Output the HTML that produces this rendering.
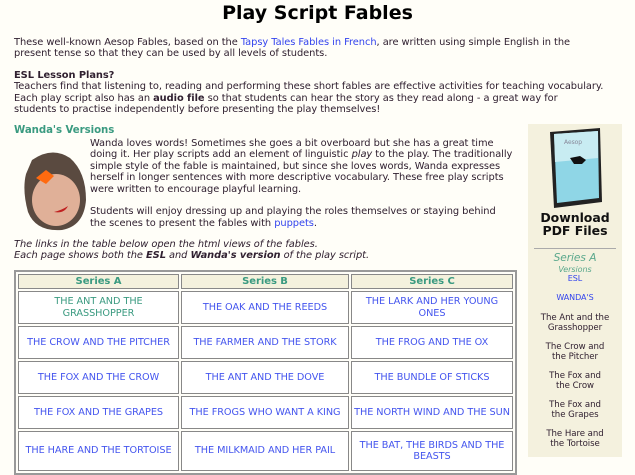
<!DOCTYPE html>
<html><head><meta charset="utf-8"><style>
*{margin:0;padding:0;box-sizing:border-box}
body{width:635px;height:457px;overflow:hidden;background:#fffef8;font-family:"DejaVu Sans","Liberation Sans",sans-serif;font-size:9.85px;color:#302030;position:relative;letter-spacing:-0.05px}
.a{position:absolute}
p{line-height:11.4px;white-space:nowrap}
a{color:#3344ee;text-decoration:none}
h1{position:absolute;left:0;width:635px;top:2px;text-align:center;font-size:19px;font-weight:bold;color:#000;letter-spacing:0}
table{border-collapse:separate;border-spacing:2px;border:2px solid #999;background:#fffef8}
td,th{border:1px solid #888;text-align:center;font-size:9.7px;background:#fff}
th{background:#f4f1dd;color:#3a9a80;height:15px;font-size:10px}
td{height:33px;color:#4455ee;line-height:11.3px}
.side{position:absolute;left:528px;top:124px;width:94px;height:333px;background:#f4f1de;text-align:center}
</style></head><body>
<h1>Play Script Fables</h1>
<p class="a" style="left:14px;top:37px">These well-known Aesop Fables, based on the <a>Tapsy Tales Fables in French</a>, are written using simple English in the<br>present tense so that they can be used by all levels of students.</p>
<p class="a" style="left:14px;top:70px"><b>ESL Lesson Plans?</b><br>Teachers find that listening to, reading and performing these short fables are effective activities for teaching vocabulary.<br>Each play script also has an <b>audio file</b> so that students can hear the story as they read along - a great way for<br>students to practise independently before presenting the play themselves!</p>
<p class="a" style="left:14px;top:125px;color:#3a9a80;font-weight:bold;font-size:10.2px">Wanda's Versions</p>
<svg class="a" style="left:22px;top:150px" width="66" height="82" viewBox="0 0 66 82">
<path d="M10 10 Q30 -4 48 8 Q64 22 64 50 Q62 76 40 80 Q14 82 6 62 Q0 40 4 24 Z" fill="#5a4a40"/>
<ellipse cx="34" cy="50" rx="24" ry="26" fill="#e0b098"/>
<path d="M14 28 l10 -8 l8 6 l-8 8z" fill="#ff6a10"/>
<path d="M32 62 q8 -2 14 -6 q-4 8 -14 6z" fill="#c02020"/>
</svg>
<p class="a" style="left:90px;top:138px">Wanda loves words! Sometimes she goes a bit overboard but she has a great time<br>doing it. Her play scripts add an element of linguistic <i>play</i> to the play. The traditionally<br>simple style of the fable is maintained, but since she loves words, Wanda expresses<br>herself in longer sentences with more descriptive vocabulary. These free play scripts<br>were written to encourage playful learning.<br><br>Students will enjoy dressing up and playing the roles themselves or staying behind<br>the scenes to present the fables with <a>puppets</a>.</p>
<p class="a" style="left:14px;top:239px;font-style:italic">The links in the table below open the html views of the fables.<br>Each page shows both the <b>ESL</b> and <b>Wanda's version</b> of the <i>play script</i>.</p>
<table class="a" style="left:14px;top:270px;width:503px">
<tr><th style="width:161px">Series A</th><th style="width:168px">Series B</th><th>Series C</th></tr>
<tr><td style="color:#3a9a80">THE ANT AND THE<br>GRASSHOPPER</td><td>THE OAK AND THE REEDS</td><td>THE LARK AND HER YOUNG<br>ONES</td></tr>
<tr><td>THE CROW AND THE PITCHER</td><td>THE FARMER AND THE STORK</td><td>THE FROG AND THE OX</td></tr>
<tr><td>THE FOX AND THE CROW</td><td>THE ANT AND THE DOVE</td><td>THE BUNDLE OF STICKS</td></tr>
<tr><td>THE FOX AND THE GRAPES</td><td>THE FROGS WHO WANT A KING</td><td>THE NORTH WIND AND THE SUN</td></tr>
<tr><td style="height:40px">THE HARE AND THE TORTOISE</td><td>THE MILKMAID AND HER PAIL</td><td>THE BAT, THE BIRDS AND THE<br>BEASTS</td></tr>
</table>
<div class="side">
<svg style="position:absolute;left:18px;top:4px" width="58" height="80" viewBox="0 0 58 80"><path d="M4 4 L54 0 L56 74 L8 80 Z" fill="#222"/><path d="M8 6 L52 3 L53 70 L11 75 Z" fill="#8fd6e6"/><path d="M8 6 L52 3 L52 30 L9 34Z" fill="#c8ecf2"/><text x="18" y="16" font-size="6" fill="#889">Aesop</text><path d="M24 30 l10 -2 l6 4 l-4 4 l-8 0z" fill="#111"/></svg>
<div style="position:absolute;top:87px;width:94px;font-weight:bold;font-size:12.5px;color:#111;line-height:13px">Download<br>PDF Files</div>
<div style="position:absolute;top:124px;left:6px;width:82px;border-top:1px solid #aaa"></div>
<div style="position:absolute;top:128px;width:94px;color:#5aa88c;font-style:italic;font-size:10.6px">Series A</div>
<div style="position:absolute;top:141px;width:94px;color:#5aa88c;font-style:italic;font-size:8px">Versions</div>
<div style="position:absolute;top:150px;width:94px;color:#3344ee;font-size:8px">ESL</div>
<div style="position:absolute;top:169px;width:94px;color:#3344ee;font-size:8px">WANDA'S</div>
<div style="position:absolute;top:189px;width:94px;color:#302030;font-size:8.6px;line-height:10px">The Ant and the<br>Grasshopper<br><div style="height:9px"></div>The Crow and<br>the Pitcher<br><div style="height:9px"></div>The Fox and<br>the Crow<br><div style="height:9px"></div>The Fox and<br>the Grapes<br><div style="height:9px"></div>The Hare and<br>the Tortoise</div>
</div>
</body></html>
